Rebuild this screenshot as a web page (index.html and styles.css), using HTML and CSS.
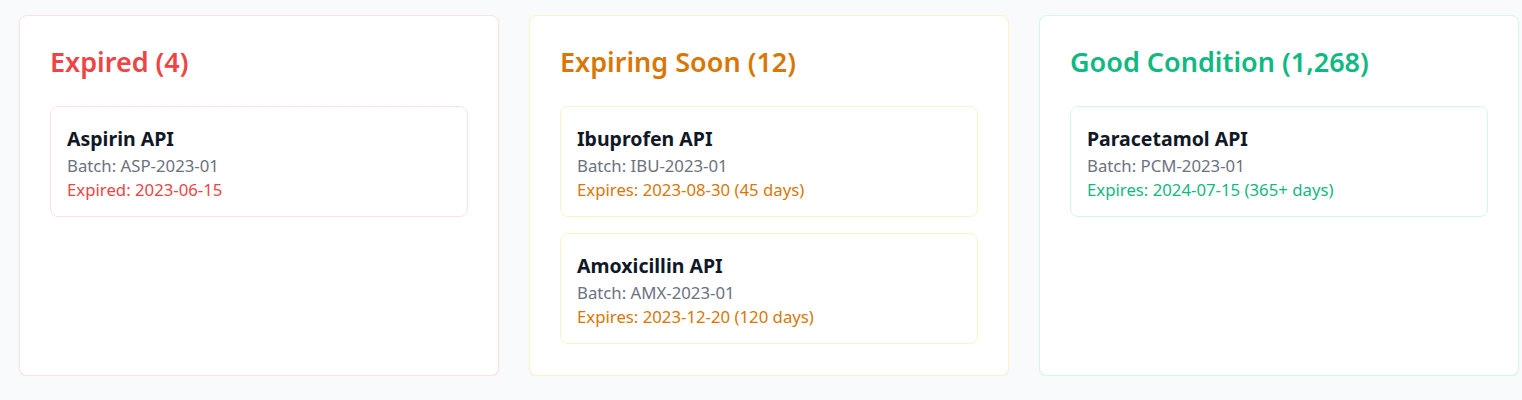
FILE: index.html
```html
<!DOCTYPE html>
<html>
<head>
<meta charset="utf-8">
<link rel="stylesheet" href="styles.css">
</head>
<body>
<div class="board">
  <section class="panel panel-red">
    <h2 class="panel-title">Expired (4)</h2>
    <div class="items">
      <div class="item">
        <div class="item-name">Aspirin API</div>
        <div class="item-batch">Batch: ASP-2023-01</div>
        <div class="item-date">Expired: 2023-06-15</div>
      </div>
    </div>
  </section>
  <section class="panel panel-amber">
    <h2 class="panel-title">Expiring Soon (12)</h2>
    <div class="items">
      <div class="item">
        <div class="item-name">Ibuprofen API</div>
        <div class="item-batch">Batch: IBU-2023-01</div>
        <div class="item-date">Expires: 2023-08-30 (45 days)</div>
      </div>
      <div class="item">
        <div class="item-name">Amoxicillin API</div>
        <div class="item-batch">Batch: AMX-2023-01</div>
        <div class="item-date">Expires: 2023-12-20 (120 days)</div>
      </div>
    </div>
  </section>
  <section class="panel panel-green">
    <h2 class="panel-title">Good Condition (1,268)</h2>
    <div class="items">
      <div class="item">
        <div class="item-name">Paracetamol API</div>
        <div class="item-batch">Batch: PCM-2023-01</div>
        <div class="item-date">Expires: 2024-07-15 (365+ days)</div>
      </div>
    </div>
  </section>
</div>
</body>
</html>
```

FILE: styles.css
```css
html, body {
  margin: 0;
  padding: 0;
  background: #f9fafb;
  font-family: "Noto Sans", "Open Sans", sans-serif;
}
.board {
  display: grid;
  grid-template-columns: 480px 480px 480px;
  column-gap: 30px;
  padding: 15px 0 0 19px;
  align-items: stretch;
}
.panel {
  background: #fff;
  border: 1px solid #fee2e2;
  border-radius: 8px;
  padding: 30px 30px 31px 30px;
  box-shadow: 0 1px 2px rgba(0,0,0,0.05);
}
.panel-red { border-color: #fee2e2; }
.panel-amber { border-color: #fef3c7; }
.panel-green { border-color: #d1fae5; }
.panel-title {
  margin: 0 0 28px 0;
  font-size: 27px;
  line-height: 32px;
  font-weight: 600;
}
.panel-red .panel-title { color: #ef4444; }
.panel-amber .panel-title { color: #d97706; }
.panel-green .panel-title { color: #10b981; }
.items {
  display: flex;
  flex-direction: column;
  gap: 16px;
}
.item {
  border: 1px solid #fee2e2;
  border-radius: 8px;
  padding: 17px 16px 14px;
}
.panel-amber .item { border-color: #fef3c7; }
.panel-green .item { border-color: #d1fae5; }
.item-name {
  font-size: 19.5px;
  line-height: 29px;
  font-weight: 700;
  color: #111827;
}
.item-batch, .item-date {
  font-size: 16.75px;
  line-height: 24px;
}
.item-batch { color: #6b7280; line-height: 25px; }
.panel-red .item-date { color: #ef4444; }
.panel-amber .item-date { color: #d97706; }
.panel-green .item-date { color: #10b981; }
```
